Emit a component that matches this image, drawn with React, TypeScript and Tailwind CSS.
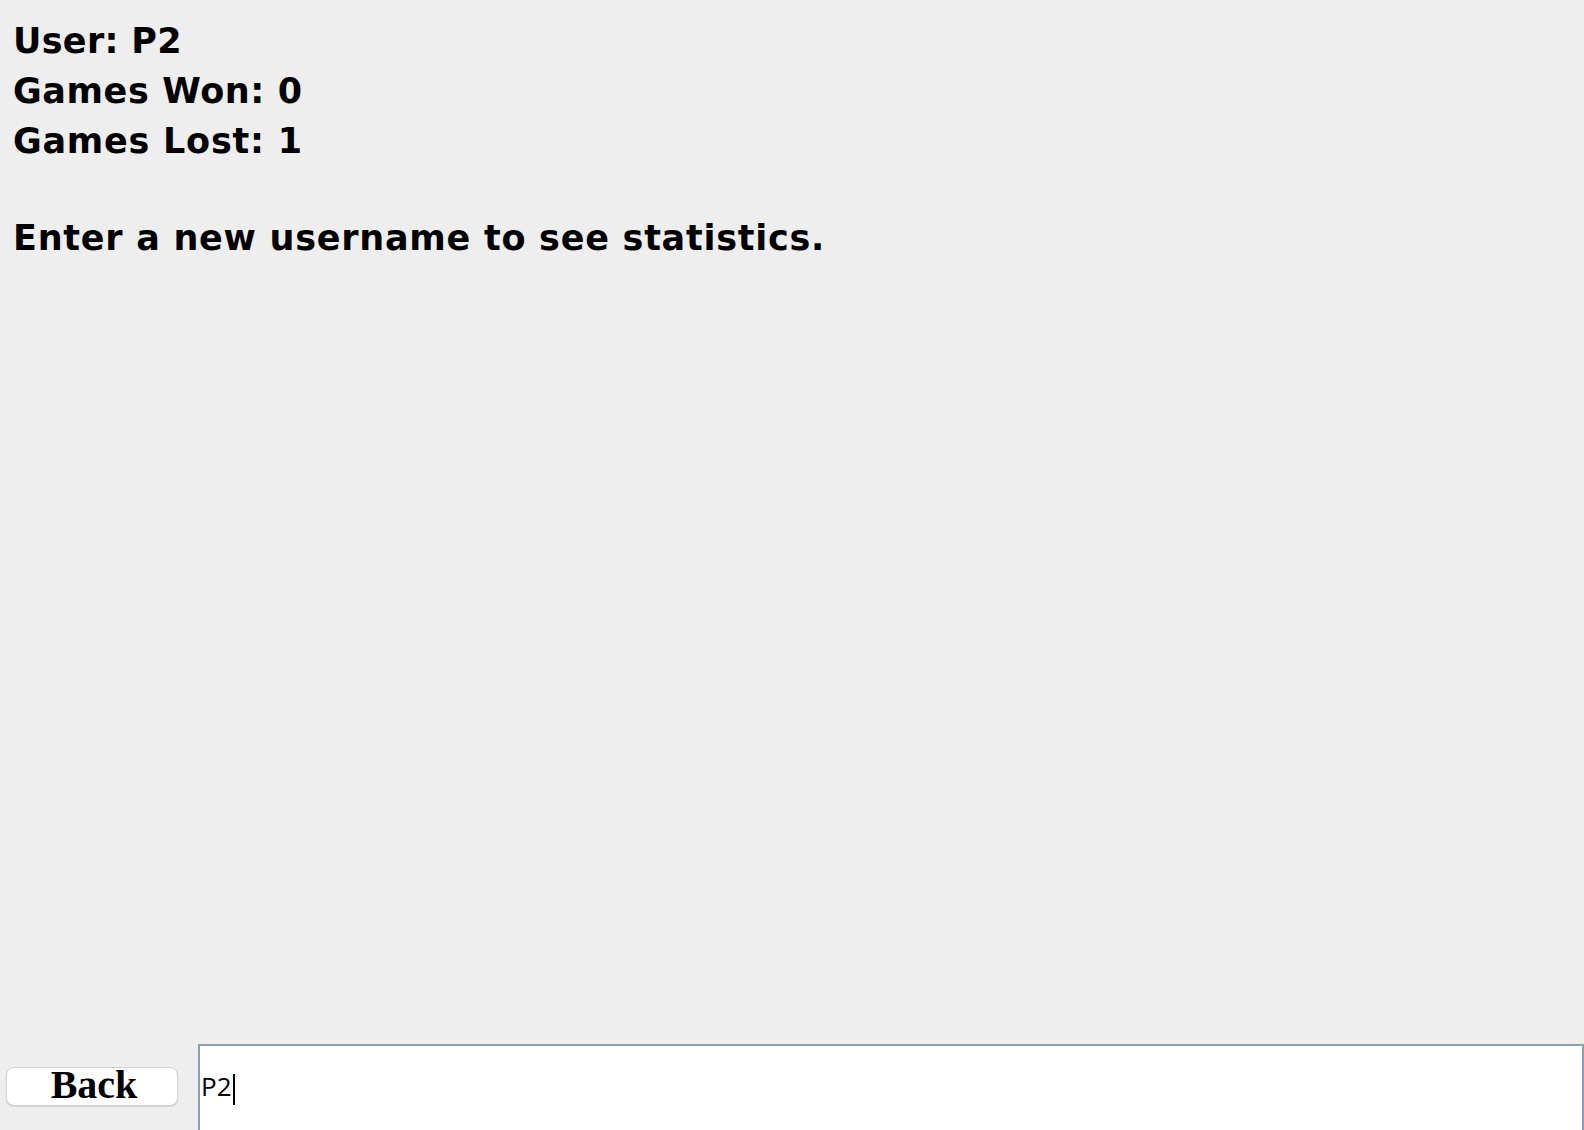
export default function App() {
  return (
    <div className="w-[1584px] h-[1130px] overflow-hidden bg-[#eeeeee] flex flex-col">
      {/* stats */}
      <div className="h-[1044px] shrink-0 pl-[13px] pt-[16px] text-black text-[35px] leading-[50px] font-bold font-['DejaVu_Sans',sans-serif]">
        <p className="tracking-[0.3px]">User: P2</p>
        <p className="tracking-[0.6px]">Games Won: 0</p>
        <p className="tracking-[0.75px]">Games Lost: 1</p>
        <p className="mt-[47px] tracking-[0.74px]">Enter a new username to see statistics.</p>
      </div>

      {/* bottom bar */}
      <div className="flex items-start flex-1 min-h-0">
        <button className="ml-[6px] mt-[23px] w-[172px] h-[39px] shrink-0 pl-[4px] pb-[4px] bg-white border border-[#d2d2d2] rounded-[8px] shadow-[0_1px_1px_rgba(0,0,0,0.12)] text-black text-[40px] leading-[30px] font-bold font-['Liberation_Serif',serif]">
          Back
        </button>
        <div className="ml-[20px] flex-1 h-[120px] bg-white border-2 border-[#8e9db0] pl-[1px] pt-[23px] flex items-start font-['Open_Sans',sans-serif] text-[26px] leading-[35px] text-black">
          <span>P2</span>
          <span className="ml-[1px] mt-[5px] w-[2px] h-[31px] bg-black" />
        </div>
      </div>
    </div>
  );
}
